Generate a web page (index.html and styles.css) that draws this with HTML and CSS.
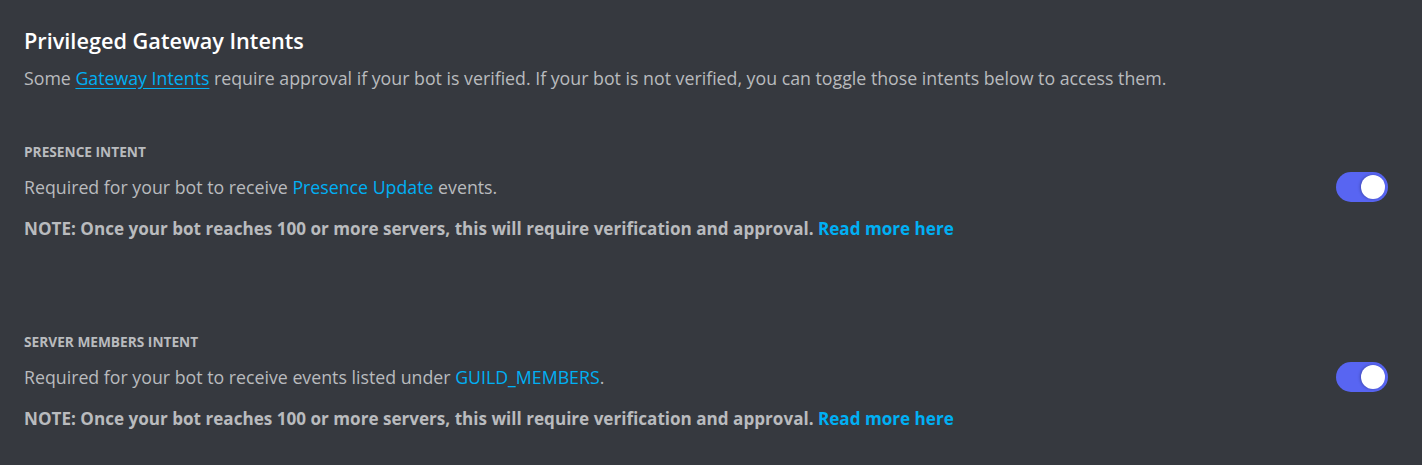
FILE: index.html
```html
<!DOCTYPE html>
<html lang="en">
<head>
<meta charset="utf-8">
<title>Privileged Gateway Intents</title>
<link rel="stylesheet" href="styles.css">
</head>
<body>
<main class="page">
  <section class="intro">
    <h2 class="title">Privileged Gateway Intents</h2>
    <p class="desc">Some <a class="link underline" href="#">Gateway Intents</a> require approval if your bot is verified. If your bot is not verified, you can toggle those intents below to access them.</p>
  </section>

  <section class="intent">
    <h3 class="label">PRESENCE INTENT</h3>
    <div class="row">
      <p class="text">Required for your bot to receive <a class="link" href="#">Presence Update</a> events.</p>
      <span class="toggle"><span class="knob"></span></span>
    </div>
    <p class="note">NOTE: Once your bot reaches 100 or more servers, this will require verification and approval. <a class="link" href="#">Read more here</a></p>
  </section>

  <section class="intent">
    <h3 class="label">SERVER MEMBERS INTENT</h3>
    <div class="row">
      <p class="text">Required for your bot to receive events listed under <a class="link" href="#">GUILD_MEMBERS</a>.</p>
      <span class="toggle"><span class="knob"></span></span>
    </div>
    <p class="note">NOTE: Once your bot reaches 100 or more servers, this will require verification and approval. <a class="link" href="#">Read more here</a></p>
  </section>
</main>
</body>
</html>
```
FILE: styles.css
```css
html, body {
  margin: 0;
  padding: 0;
  background: #36393f;
}
body {
  font-family: "Open Sans", "Noto Sans", sans-serif;
  color: #b9bbbe;
  height: 465px;
  overflow: hidden;
}
.page {
  padding: 26px 34px 0 24px;
}
.title {
  margin: 0;
  font-size: 21.7px;
  font-weight: 600;
  color: #ffffff;
  line-height: 30px;
}
.desc {
  margin: 9px 0 0;
  font-size: 17.75px;
  line-height: 26px;
}
.link {
  color: #00b0f4;
  text-decoration: none;
}
.underline {
  text-decoration: underline;
  text-underline-offset: 3px;
}
.intent {
  margin-top: 52px;
}
.intent + .intent {
  margin-top: 91px;
}
.label {
  margin: 0;
  font-size: 13.7px;
  font-weight: 700;
  line-height: 18px;
}
.row {
  display: flex;
  align-items: center;
  justify-content: space-between;
  margin-top: 11px;
}
.text {
  margin: 0;
  font-size: 17.75px;
  line-height: 26px;
}
.toggle {
  display: flex;
  justify-content: flex-end;
  align-items: center;
  box-sizing: border-box;
  width: 52px;
  height: 30px;
  padding: 3px;
  border-radius: 15px;
  background: #5865f2;
}
.knob {
  width: 24px;
  height: 24px;
  border-radius: 50%;
  background: #ffffff;
  box-shadow: -1px 0 3px rgba(0,0,0,0.25);
}
.note {
  margin: 14px 0 0;
  font-size: 17.1px;
  line-height: 26px;
  font-weight: 700;
}
```
